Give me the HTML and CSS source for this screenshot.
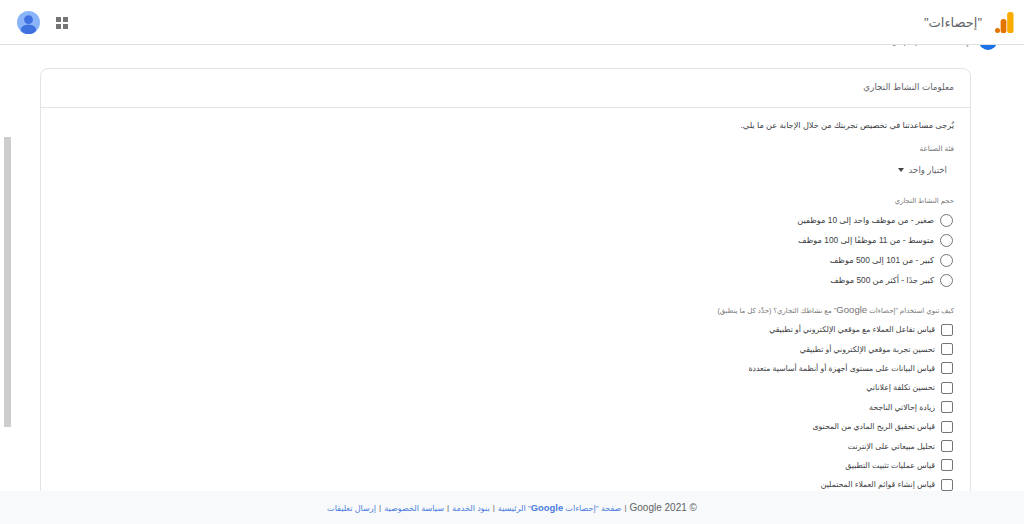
FILE: index.html
```html
<!DOCTYPE html>
<html lang="ar" dir="rtl">
<head>
<meta charset="utf-8">
<title>إحصاءات</title>
<link rel="stylesheet" href="styles.css">
</head>
<body>
<header class="topbar">
  <div class="brand">
    <svg class="logo" viewBox="0 0 19 21" width="19" height="21" aria-hidden="true">
      <rect x="12.2" y="0" width="6.3" height="21" rx="2.6" fill="#f9ab00"/>
      <rect x="5.6" y="7" width="5.8" height="14" rx="2.6" fill="#e37400"/>
      <circle cx="2.5" cy="18.5" r="2.5" fill="#e37400"/>
    </svg>
    <span class="product">"إحصاءات"</span>
  </div>
  <div class="tools">
    <svg class="apps" viewBox="0 0 12 12" width="12" height="12" aria-hidden="true">
      <rect x="0" y="0" width="5" height="5" fill="#757575"/>
      <rect x="7" y="0" width="5" height="5" fill="#757575"/>
      <rect x="0" y="7" width="5" height="5" fill="#757575"/>
      <rect x="7" y="7" width="5" height="5" fill="#757575"/>
    </svg>
    <svg class="avatar" viewBox="0 0 24 24" width="23" height="23" aria-hidden="true">
      <clipPath id="c"><circle cx="12" cy="12" r="12"/></clipPath>
      <circle cx="12" cy="12" r="12" fill="#8ab4f8"/>
      <g clip-path="url(#c)">
        <circle cx="12" cy="9" r="4.6" fill="#3f72e0"/>
        <ellipse cx="12" cy="19.5" rx="8" ry="5.5" fill="#3f72e0"/>
      </g>
    </svg>
  </div>
</header>

<main class="content">
  <div class="scrollthumb"></div>
  <div class="step">
    <span class="step-dot"></span>
    <span class="step-name">إنشاء حساب جديد</span>
  </div>
  <section class="card">
    <h2 class="card-title">معلومات النشاط التجاري</h2>
    <div class="card-body">
      <p class="intro">يُرجى مساعدتنا في تخصيص تجربتك من خلال الإجابة عن ما يلي.</p>
      <div class="field-label">فئة الصناعة</div>
      <div class="select"><span>اختيار واحد</span><span class="caret"></span></div>

      <div class="field-label size-label">حجم النشاط التجاري</div>
      <ul class="options radios">
        <li><span class="radio"></span>صغير - من موظف واحد إلى 10 موظفين</li>
        <li><span class="radio"></span>متوسط - من 11 موظفًا إلى 100 موظف</li>
        <li><span class="radio"></span>كبير - من 101 إلى 500 موظف</li>
        <li><span class="radio"></span>كبير جدًا - أكثر من 500 موظف</li>
      </ul>

      <div class="field-label use-label">كيف تنوي استخدام "إحصاءات <span class="latin">Google</span>" مع نشاطك التجاري؟ (حدِّد كل ما ينطبق)</div>
      <ul class="options checks">
        <li><span class="check"></span>قياس تفاعل العملاء مع موقعي الإلكتروني أو تطبيقي</li>
        <li><span class="check"></span>تحسين تجربة موقعي الإلكتروني أو تطبيقي</li>
        <li><span class="check"></span>قياس البيانات على مستوى أجهزة أو أنظمة أساسية متعددة</li>
        <li><span class="check"></span>تحسين تكلفة إعلاناتي</li>
        <li><span class="check"></span>زيادة إحالاتي الناجحة</li>
        <li><span class="check"></span>قياس تحقيق الربح المادي من المحتوى</li>
        <li><span class="check"></span>تحليل مبيعاتي على الإنترنت</li>
        <li><span class="check"></span>قياس عمليات تثبيت التطبيق</li>
        <li><span class="check"></span>قياس إنشاء قوائم العملاء المحتملين</li>
      </ul>
    </div>
  </section>
</main>

<footer class="footer">
  <span class="copyright">© Google 2021</span> |
  <a href="#">صفحة "إحصاءات <span class="latin strong">Google</span>" الرئيسية</a> |
  <a href="#">بنود الخدمة</a> |
  <a href="#">سياسة الخصوصية</a> |
  <a href="#">إرسال تعليقات</a>
</footer>
</body>
</html>
```

FILE: styles.css
```css
* { box-sizing: border-box; }
html, body { margin: 0; height: 100%; }
body {
  height: 524px;
  display: flex;
  flex-direction: column;
  overflow: hidden;
  background: #fff;
  color: #3c4043;
  font-family: "Liberation Sans", "Noto Sans", "DejaVu Sans", sans-serif;
}
.topbar {
  flex: 0 0 45px;
  display: flex;
  align-items: center;
  justify-content: space-between;
  border-bottom: 1px solid #e0e0e0;
  padding: 0 10px 0 17px;
}
.brand { display: flex; align-items: center; gap: 13px; }
.logo { display: block; }
.product { font-size: 13px; color: #5f6368; }
.tools { display: flex; align-items: center; gap: 16px; }
.apps { display: block; margin-top: 1px; }
.avatar { display: block; }
.content {
  flex: 1;
  position: relative;
  overflow: hidden;
  padding: 0 53px 0 40px;
  min-height: 0;
}
.scrollthumb {
  position: absolute;
  left: 4px;
  top: 92px;
  width: 7px;
  height: 290px;
  background: #cdcdcd;
}
.step {
  height: 23px;
  margin: 0 -26px 0 0;
  display: flex;
  align-items: flex-end;
  gap: 10px;
  position: relative;
}
.step-dot {
  flex: none;
  width: 18px;
  height: 18px;
  border-radius: 50%;
  background: #1a73e8;
  margin-bottom: 18px;
}
.step-name { font-size: 11px; line-height: 14px; margin-bottom: 21px; color: #5f6368; }
.card {
  border: 1px solid #e3e3e3;
  border-radius: 8px 8px 0 0;
  background: #fff;
}
.card-title {
  margin: 0;
  height: 39px;
  padding: 0 16px 2px;
  display: flex;
  align-items: center;
  font-size: 8.8px;
  font-weight: 400;
  color: #5f6368;
  border-bottom: 1px solid #e3e3e3;
}
.card-body { padding: 11px 16px 0; }
.intro { margin: 0; font-size: 8.2px; line-height: 14px; color: #3c4043; }
.field-label { font-size: 7.2px; line-height: 12px; color: #757575; }
.card-body > .field-label:first-of-type { margin-top: 10px; }
.select {
  display: flex;
  align-items: center;
  gap: 5px;
  margin: 8px 7px 0 0;
  font-size: 8.6px;
  line-height: 14px;
  color: #5f6368;
}
.caret {
  width: 0;
  height: 0;
  border-left: 3.5px solid transparent;
  border-right: 3.5px solid transparent;
  border-top: 4px solid #444;
}
.size-label { margin-top: 18px; font-size: 6.9px; }
.use-label { margin-top: 14px; font-size: 7px; }
.latin { font-size: 9.6px; }
.strong { font-weight: 700; font-size: 9.4px; }
.options { list-style: none; margin: 0 1px 0 0; padding: 0; color: #3c4043; }
.options li { display: flex; align-items: center; }
.radios { margin-top: 3px; font-size: 8.3px; }
.radios li { height: 20px; gap: 6px; }
.checks { margin-top: 3px; font-size: 7.8px; }
.checks li { height: 19.4px; gap: 6px; }
.radio {
  flex: none;
  width: 13px;
  height: 13px;
  border: 1px solid #757575;
  border-radius: 50%;
}
.check {
  flex: none;
  width: 12px;
  height: 12px;
  border: 1px solid #757575;
  border-radius: 2px;
}
.footer {
  flex: 0 0 33px;
  display: flex;
  align-items: center;
  justify-content: center;
  gap: 3px;
  background: #f8f9fa;
  font-size: 8.1px;
  color: #5f6368;
}
.copyright { font-size: 10px; }
.footer a { color: #4a7de0; text-decoration: none; }
```
